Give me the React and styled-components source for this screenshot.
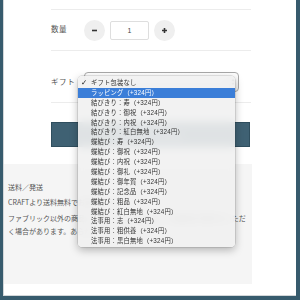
import React from 'react'
import styled, { createGlobalStyle } from 'styled-components'

const GlobalStyle = createGlobalStyle`
  html, body {
    margin: 0;
    padding: 0;
  }
  body {
    background: #375b6d;
    font-family: "Noto Sans CJK JP", "Noto Sans", sans-serif;
  }
`

const Frame = styled.div`
  width: 300px;
  height: 300px;
  box-sizing: border-box;
  padding: 0 4px 4px 3px;
  background: #375b6d;
`

const Page = styled.div`
  position: relative;
  height: 100%;
  box-sizing: border-box;
  background: #fff;
  border-left: 1px solid #d3d7d9;
  border-bottom: 1px solid #d3d7d9;
  padding-top: 9px;
  overflow: hidden;
`

const Form = styled.div`
  margin-left: 47px;
  width: 200px;
`

const Row = styled.div`
  display: flex;
  align-items: center;
  border-bottom: 1px solid #ececec;
  border-top: ${p => (p.$first ? '1px solid #ececec' : 'none')};
  height: ${p => p.$height || 'auto'};
  padding: ${p => p.$pad || '0'};
`

const Label = styled.div`
  width: 33px;
  font-size: 7.5px;
  line-height: 10px;
  letter-spacing: 0.6px;
  color: #555;
  margin-top: ${p => p.$shift || '0'};
`

const Stepper = styled.div`
  display: flex;
  align-items: center;
  gap: 5px;
`

const RoundBtn = styled.div`
  width: 21px;
  height: 21px;
  border-radius: 50%;
  background: #efefef;
  display: flex;
  align-items: center;
  justify-content: center;
`

const QtyInput = styled.div`
  width: 39px;
  height: 19px;
  box-sizing: border-box;
  border: 1px solid #dedede;
  border-radius: 2px;
  display: flex;
  align-items: center;
  justify-content: center;
  font-family: "Liberation Sans", sans-serif;
  font-size: 7px;
  color: #444;
`

const SelectWrap = styled.div`
  position: relative;
  width: 155px;
  height: 20px;
`

const SelectBox = styled.div`
  height: 100%;
  box-sizing: border-box;
  border: 1px solid #a8a8a8;
  border-radius: 4px;
  background: linear-gradient(#ffffff, #f0f0f0);
  display: flex;
  align-items: center;
  justify-content: flex-end;
  padding-right: 3px;
`

const Menu = styled.div`
  position: absolute;
  left: -6px;
  top: 4px;
  width: 157px;
  padding: 2px 0 1px;
  background: rgba(241, 241, 241, 0.9);
  backdrop-filter: blur(5px);
  border-radius: 4px;
  box-shadow: 0 3px 8px rgba(0, 0, 0, 0.28), 0 0 0 0.5px rgba(0, 0, 0, 0.18);
  z-index: 5;
`

const Item = styled.div`
  position: relative;
  height: 9.9px;
  line-height: 9.9px;
  padding-left: 13px;
  font-family: "Liberation Sans", "Noto Sans CJK JP", sans-serif;
  font-size: 6.3px;
  letter-spacing: 0.2px;
  white-space: nowrap;
  color: ${p => (p.$active ? '#fff' : '#333')};
  background: ${p => (p.$active ? '#3b7ed8' : 'transparent')};
`

const Check = styled.span`
  position: absolute;
  left: 3px;
  top: 0;
  font-family: "DejaVu Sans", sans-serif;
  font-size: 7.5px;
  font-weight: bold;
  color: #111;
`

const CartButton = styled.div`
  margin-top: 19px;
  height: 25px;
  width: 199px;
  box-sizing: border-box;
  background: #3f6173;
  border: 1px solid #2f4e5e;
  color: #fff;
  font-size: 8px;
  display: flex;
  align-items: center;
  justify-content: center;
  letter-spacing: 1px;
`

const Info = styled.div`
  margin-top: 17px;
  width: 248px;
  height: 120px;
  box-sizing: border-box;
  background: #f5f5f5;
  padding: 17px 4px 0 4px;
  font-size: 7px;
  line-height: 13px;
  color: #555;
`

const InfoLine = styled.p`
  margin: ${p => p.$gap || '0'} 0 0;
`

const options = [
  'ラッピング（+324円）',
  '結びきり：寿（+324円）',
  '結びきり：御祝（+324円）',
  '結びきり：内祝（+324円）',
  '結びきり：紅白無地（+324円）',
  '蝶結び：寿（+324円）',
  '蝶結び：御祝（+324円）',
  '蝶結び：内祝（+324円）',
  '蝶結び：御礼（+324円）',
  '蝶結び：御年賀（+324円）',
  '蝶結び：記念品（+324円）',
  '蝶結び：粗品（+324円）',
  '蝶結び：紅白無地（+324円）',
  '法事用：志（+324円）',
  '法事用：粗供養（+324円）',
  '法事用：黒白無地（+324円）',
]

const Minus = () => (
  <svg width="7" height="7" viewBox="0 0 7 7">
    <path d="M1 3.5h5" stroke="#333" strokeWidth="1.6" />
  </svg>
)

const Plus = () => (
  <svg width="7" height="7" viewBox="0 0 7 7">
    <path d="M1 3.5h5M3.5 1v5" stroke="#333" strokeWidth="1.6" />
  </svg>
)

const Arrows = () => (
  <svg width="4" height="8" viewBox="0 0 4 8">
    <path d="M0.3 3.2L2 0.8 3.7 3.2zM0.3 4.8L2 7.2 3.7 4.8z" fill="#333" />
  </svg>
)

const App = () => (
  <Frame>
    <GlobalStyle />
    <Page>
      <Form>
        <Row $first $height="40px">
          <Label $shift="-2px">数量</Label>
          <Stepper>
            <RoundBtn><Minus /></RoundBtn>
            <QtyInput>1</QtyInput>
            <RoundBtn><Plus /></RoundBtn>
          </Stepper>
        </Row>
        <Row $pad="21px 0 10px">
          <Label>ギフト</Label>
          <SelectWrap>
            <SelectBox><Arrows /></SelectBox>
            <Menu>
              <Item><Check>✓</Check>ギフト包装なし</Item>
              {options.map((o, i) => (
                <Item key={o} $active={i === 0}>{o}</Item>
              ))}
            </Menu>
          </SelectWrap>
        </Row>
        <CartButton>カートに入れる</CartButton>
      </Form>
      <Info>
        <InfoLine>送料／発送</InfoLine>
        <InfoLine $gap="2px">CRAFTより送料無料でお届けします。</InfoLine>
        <InfoLine $gap="3px">
          ファブリック以外の商品と一緒にご注文の場合は、別途配送手数料をいただ<br />
          く場合があります。あらかじめご了承ください。
        </InfoLine>
      </Info>
    </Page>
  </Frame>
)

export default App
